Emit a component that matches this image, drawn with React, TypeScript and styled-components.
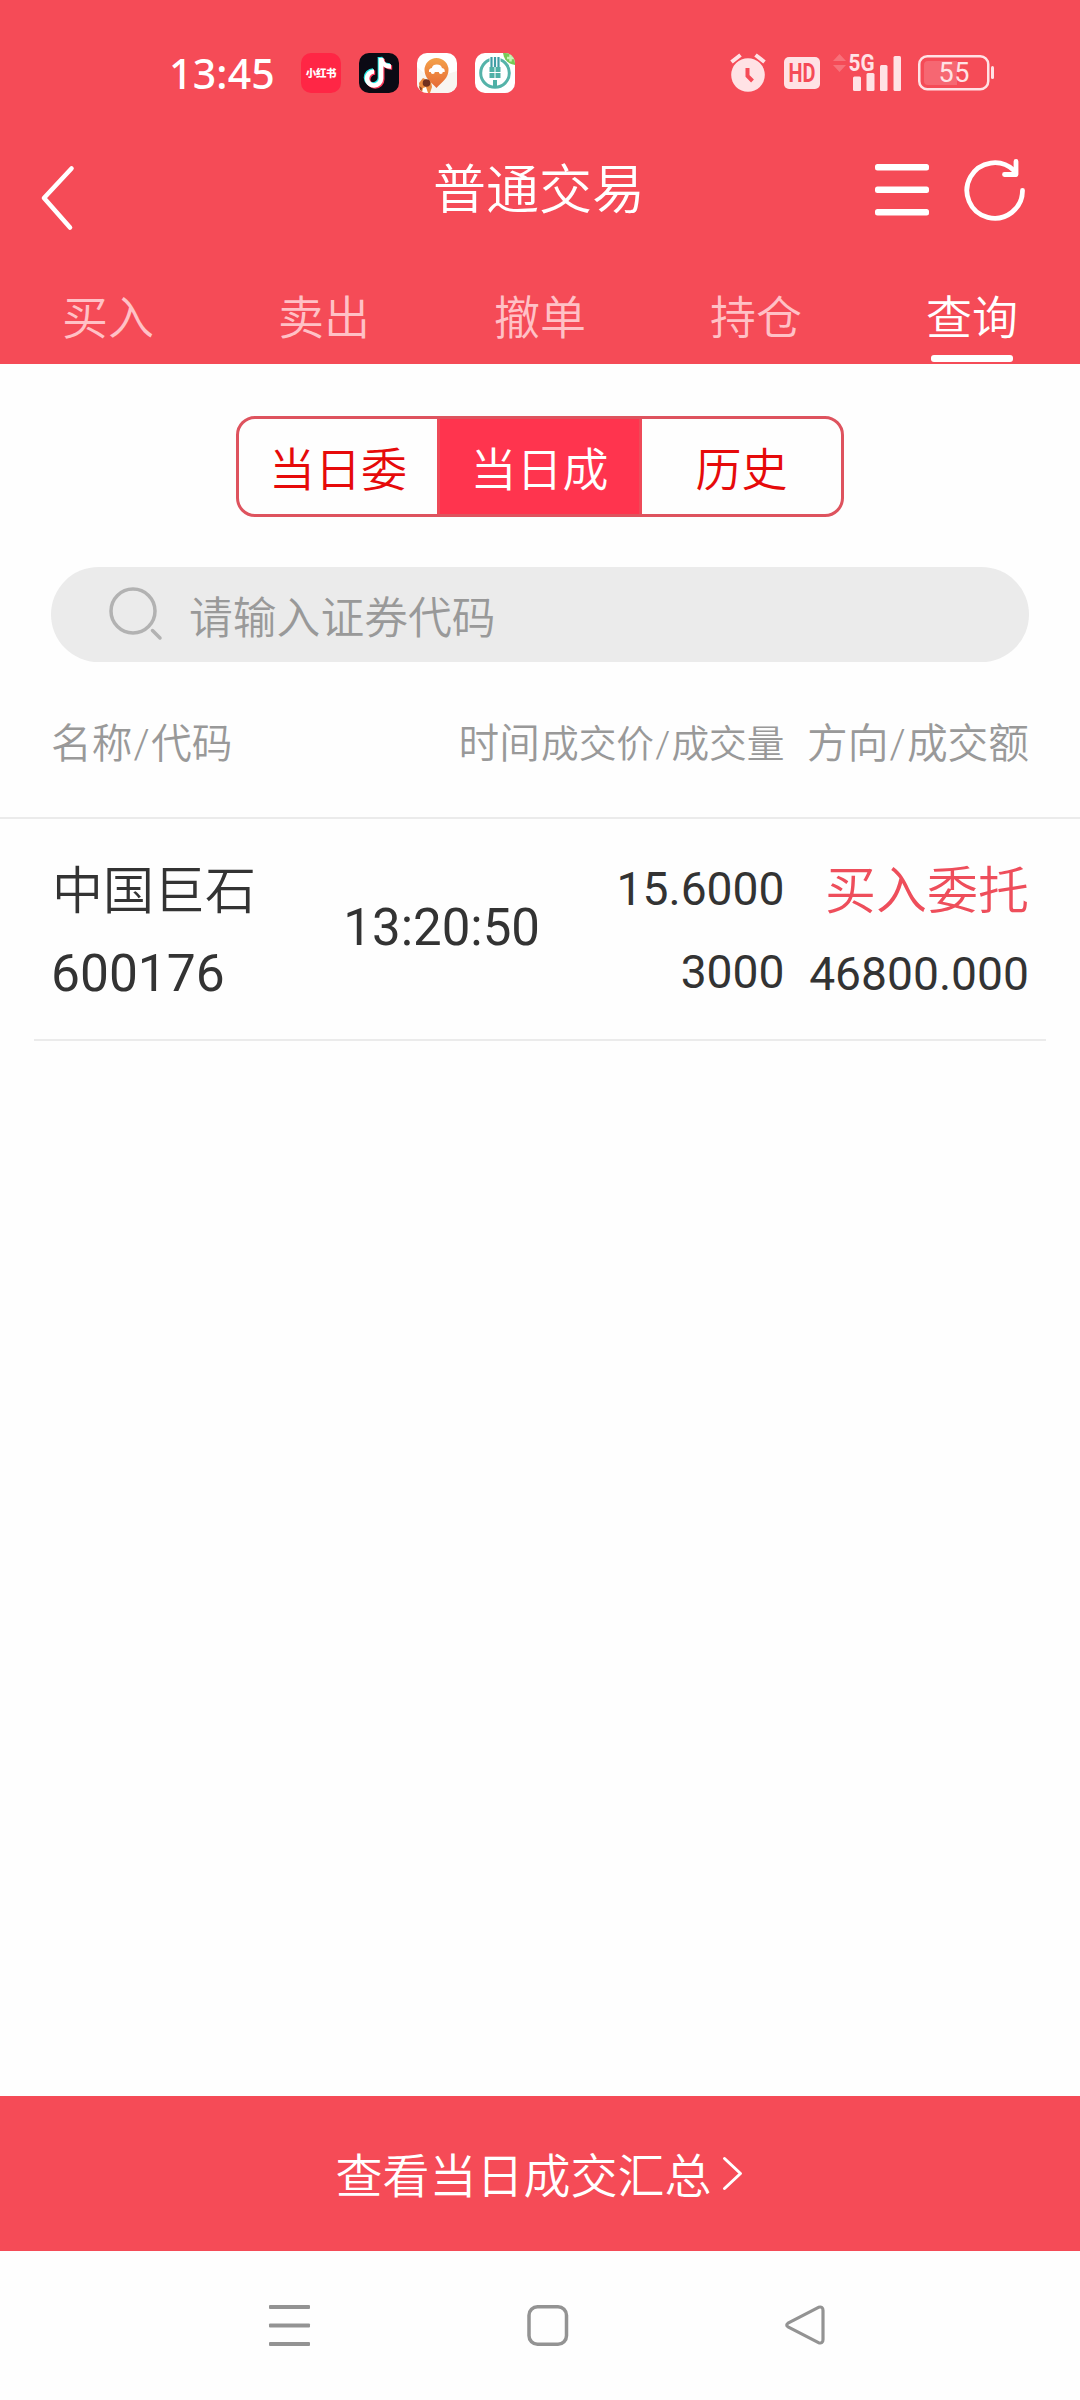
import React from 'react';
import styled, { createGlobalStyle } from 'styled-components';

const RED = '#f54b57';
const FONT = 'Roboto, "Noto Sans CJK SC", sans-serif';

const GlobalStyle = createGlobalStyle`
  *, *::before, *::after { box-sizing: border-box; }
  body { margin: 0; background: #fefefe; font-family: ${FONT}; font-weight: 400; }
  svg { display: block; flex: none; overflow: visible; }
  button { border: 0; padding: 0; background: none; font: inherit; color: inherit; }
`;

const Screen = styled.div`
  width: 1080px;
  height: 2400px;
  display: flex;
  flex-direction: column;
  background: #fefefe;
  overflow: hidden;
`;

const Header = styled.header`
  height: 364px;
  display: flex;
  flex-direction: column;
  background: ${RED};
  color: #fff;
`;

const StatusBar = styled.div`
  height: 146px;
  padding: 0 86px 0 169px;
  display: flex;
  justify-content: space-between;
  align-items: center;
`;

const StatusGroup = styled.div<{ $gap: number }>`
  display: flex;
  align-items: center;
  gap: ${(p) => p.$gap}px;
`;

const Clock = styled.span`
  width: 114px;
  font: 500 41px/50px "Noto Sans", sans-serif;
  letter-spacing: 0.2px;
  white-space: nowrap;
`;

const AppBadge = styled.div<{ $bg: string }>`
  width: 40px;
  height: 40px;
  border-radius: 10px;
  overflow: hidden;
  display: flex;
  align-items: center;
  justify-content: center;
  background: ${(p) => p.$bg};
`;

const BadgeText = styled.span`
  font: 900 10.5px/14px "Noto Sans CJK SC", sans-serif;
  color: #fff;
  letter-spacing: -0.3px;
  white-space: nowrap;
`;

const TitleBar = styled.div`
  height: 90px;
  padding: 0 55px 0 40px;
  display: grid;
  grid-template-columns: 1fr auto 1fr;
  align-items: center;
`;

const BackButton = styled.button`
  padding-top: 14px;
  justify-self: start;
`;

const Title = styled.h1`
  margin: 0 0 0 13px;
  font-size: 53px;
  line-height: 60px;
  font-weight: 350;
`;

const TitleActions = styled.div`
  justify-self: end;
  display: flex;
  align-items: center;
  gap: 34px;
  padding-bottom: 3px;
`;

const Tabs = styled.nav`
  flex: 1;
  display: grid;
  grid-template-columns: repeat(5, 1fr);
`;

const Tab = styled.button<{ $active?: boolean }>`
  display: flex;
  flex-direction: column;
  align-items: center;
  justify-content: flex-end;
  padding-bottom: 2px;
  gap: 10px;
  font-size: 46px;
  line-height: 54px;
  font-weight: 350;
  color: ${(p) => (p.$active ? '#fff' : '#ffc1c6')};

  &::after {
    content: '';
    width: 82px;
    height: 7px;
    border-radius: 3px;
    background: ${(p) => (p.$active ? '#fff' : 'transparent')};
  }
`;

const Main = styled.main`
  flex: 1;
  display: flex;
  flex-direction: column;
`;

const Segments = styled.div`
  width: 608px;
  height: 101px;
  margin: 52px auto 50px;
  display: grid;
  grid-template-columns: 198px 205px 1fr;
  border: 3px solid #de535e;
  border-radius: 19px;
  overflow: hidden;
`;

const Segment = styled.button<{ $active?: boolean }>`
  font-size: 46px;
  line-height: 54px;
  padding-top: 7px;
  font-weight: 350;
  color: ${(p) => (p.$active ? '#fff' : '#e60a0a')};
  background: ${(p) => (p.$active ? '#ff344e' : 'transparent')};
  border: solid #ee4a58;
  border-width: ${(p) => (p.$active ? '0 3px' : '0')};
`;

const SearchBox = styled.div`
  height: 95px;
  margin: 0 51px;
  padding-left: 57px;
  display: flex;
  align-items: center;
  gap: 25px;
  border-radius: 48px;
  background: #ebebeb;
`;

const Placeholder = styled.span`
  padding-top: 9px;
  font-size: 43.8px;
  line-height: 52px;
  font-weight: 350;
  color: #999;
`;

const Columns = styled.div`
  display: grid;
  grid-template-columns: repeat(4, 1fr);
`;

const TableHead = styled(Columns)`
  height: 157px;
  padding: 55px 51px 0;
  border-bottom: 2px solid #ebebeb;
`;

const HeadCell = styled.span<{ $right?: boolean; $size?: number }>`
  font-size: ${(p) => p.$size ?? 40.7}px;
  line-height: 54px;
  font-weight: 350;
  color: #999;
  white-space: nowrap;
  text-align: ${(p) => (p.$right ? 'right' : 'left')};
`;

const Slash = styled.span`
  margin: 0 1.2px;
`;

const TradeRow = styled(Columns)`
  height: 222px;
  margin: 0 34px;
  padding: 29px 17px 0;
  border-bottom: 2px solid #ebebeb;
`;

const Cell = styled.div<{ $right?: boolean }>`
  height: 166px;
  display: flex;
  flex-direction: column;
  align-items: ${(p) => (p.$right ? 'flex-end' : 'flex-start')};
`;

const TimeCell = styled(Cell)`
  justify-content: center;
  height: 160px;
`;

const Value = styled.span<{ $size: number }>`
  font-size: ${(p) => p.$size}px;
  line-height: 84px;
  color: #333;
  white-space: nowrap;
`;

const Price = styled(Value)`
  height: 83px;
  line-height: 82px;
`;

const Quantity = styled(Value)`
  line-height: 85px;
`;

const CjkValue = styled(Value)`
  height: 84px;
  line-height: 87px;
  font-weight: 350;
`;

const Direction = styled(CjkValue)`
  color: #ee4e5b;
`;

const NameValue = styled(CjkValue)`
  padding-left: 1px;
`;

const SummaryButton = styled.button`
  height: 155px;
  display: flex;
  align-items: center;
  justify-content: center;
  gap: 10px;
  background: ${RED};
  color: #fff;
  font-size: 47px;
  line-height: 56px;
  font-weight: 350;
`;

const SummaryLabel = styled.span`
  padding-top: 6px;
`;

const SystemNav = styled.div`
  height: 149px;
  padding: 0 253px 0 267px;
  display: flex;
  align-items: center;
  justify-content: space-between;
`;

const tabs = ['买入', '卖出', '撤单', '持仓', '查询'];
const segments = ['当日委', '当日成', '历史'];

const NoteIcon = () => (
  <svg width="40" height="40" viewBox="0 0 40 40" fill="none" strokeWidth="4.6">
    <g stroke="#25e8e4" transform="translate(-1 -1)">
      <path d="M22 5v20.500a7 7 0 1 1-7-7" />
      <path d="M22 5c.5 5 4 8.500 10 8.500" />
    </g>
    <g stroke="#fb3b5b" transform="translate(1.200 1)">
      <path d="M22 5v20.500a7 7 0 1 1-7-7" />
      <path d="M22 5c.5 5 4 8.500 10 8.500" />
    </g>
    <g stroke="#fff">
      <path d="M22 5v20.500a7 7 0 1 1-7-7" />
      <path d="M22 5c.5 5 4 8.500 10 8.500" />
    </g>
  </svg>
);

const CarPinIcon = () => (
  <svg width="40" height="40" viewBox="0 0 40 40">
    <defs>
      <linearGradient id="pin" x1="0" y1="0" x2="0" y2="1">
        <stop offset="0" stopColor="#f4a24a" />
        <stop offset="1" stopColor="#e66a35" />
      </linearGradient>
    </defs>
    <path d="M0 14l14 12 26-8v22H0z" fill="#f8f5f1" />
    <path d="M19.500 35C14 29 7.500 25 7.500 17a12 12 0 0 1 24 0c0 8-6.500 12-12 18z" fill="url(#pin)" />
    <path d="M12 19c-.3-2.500.5-3.500 2.800-4 1-2.700 2-3.500 5-3.500s4.200.8 5.200 3.500c2.300.5 3 1.500 2.700 4h-1.900a2 2 0 0 1-4 0h-4a2 2 0 0 1-4 0z" fill="#fff" />
    <path d="M2 30l4-5 8 4 1 5-2 6H3z" fill="#e9893f" />
    <circle cx="9.500" cy="30" r="3.800" fill="#70301f" />
    <path d="M6 35l3-1 2 6H5z" fill="#fff" />
    <path d="M2 33l3 2-1 4z" fill="#8a3f22" />
  </svg>
);

const BankIcon = () => (
  <svg width="40" height="40" viewBox="0 0 40 40" fill="none">
    <circle cx="20" cy="20" r="14.300" stroke="#55b3a9" strokeWidth="3" />
    <path d="M14.500 3h11v10h-11z" fill="#fff" />
    <path d="M16.500 4v10M20 4v10M23.500 4v10" stroke="#3f9da5" strokeWidth="2.200" />
    <path d="M14.500 14h11v11h-11zM18 27h4v8h-4z" fill="#4fb0a6" />
    <path d="M20 14v11M14 19.500h12" stroke="#fff" strokeWidth="1" />
    <path d="M28 0h12v12C33 11 29 7 28 0z" fill="#78c957" />
    <path d="M35.500 1.500v7M32 5h7" stroke="#c9f3b5" strokeWidth="2.500" />
  </svg>
);

const AlarmIcon = () => (
  <svg width="36" height="40" viewBox="0 0 36 40" fill="none">
    <circle cx="18" cy="22" r="16.800" fill="#ffe2e5" />
    <path d="M1.500 9l9-7M34.500 9l-9-7" stroke="#ffe2e5" strokeWidth="4" />
    <path d="M17.500 15v8l5 5" stroke={RED} strokeWidth="4" />
  </svg>
);

const SvgText = styled.text<{ $size: number; $weight?: number; $fill: string }>`
  font: ${(p) => p.$weight ?? 700} ${(p) => p.$size}px Roboto, sans-serif;
  fill: ${(p) => p.$fill};
`;

const HdIcon = () => (
  <svg width="36" height="32" viewBox="0 0 36 32">
    <rect width="36" height="32" rx="5" fill="#ffe2e5" />
    <SvgText $size={25} $fill={RED} x="4.500" y="25" textLength="27" lengthAdjust="spacingAndGlyphs">HD</SvgText>
  </svg>
);

const SignalIcon = () => (
  <svg width="69" height="40" viewBox="0 0 69 40" fill="#ffe2e5">
    <path d="M0 8l6.500-7L13 8zM0 12h13l-6.500 7z" opacity=".25" />
    <SvgText $size={24} $fill="#ffe2e5" x="15.500" y="18" textLength="26" lengthAdjust="spacingAndGlyphs">5G</SvgText>
    <rect x="20" y="23.500" width="8" height="14.500" rx="1.500" />
    <rect x="33.500" y="20" width="8" height="18" rx="1.500" />
    <rect x="47" y="12" width="7.500" height="26" rx="1.500" />
    <rect x="60.500" y="3" width="7.500" height="35" rx="1.500" />
  </svg>
);

const BatteryIcon = () => (
  <svg width="76" height="36" viewBox="0 0 76 36">
    <rect x="1.250" y="1.250" width="69" height="33" rx="8" fill="none" stroke="#ffe2e5" strokeWidth="2.500" />
    <path d="M10 6h29v24H10a4 4 0 0 1-4-4V10a4 4 0 0 1 4-4z" fill="#fff" opacity=".16" />
    <rect x="73" y="11" width="3" height="13" rx="1.500" fill="#ffe2e5" />
    <SvgText $size={27} $weight={400} $fill="#ffe2e5" x="20.500" y="27" textLength="31">55</SvgText>
  </svg>
);

export default function App() {
  return (
    <Screen>
      <GlobalStyle />
      <Header>
        <StatusBar>
          <StatusGroup $gap={18}>
            <Clock>13:45</Clock>
            <AppBadge $bg="#ff2645"><BadgeText>小红书</BadgeText></AppBadge>
            <AppBadge $bg="#0b0a14"><NoteIcon /></AppBadge>
            <AppBadge $bg="#fff"><CarPinIcon /></AppBadge>
            <AppBadge $bg="#fff"><BankIcon /></AppBadge>
          </StatusGroup>
          <StatusGroup $gap={16}>
            <StatusGroup $gap={13}>
              <StatusGroup $gap={18}>
                <AlarmIcon />
                <HdIcon />
              </StatusGroup>
              <SignalIcon />
            </StatusGroup>
            <BatteryIcon />
          </StatusGroup>
        </StatusBar>
        <TitleBar>
          <BackButton aria-label="返回">
            <svg width="36" height="66" viewBox="0 0 36 66" fill="none" stroke="#fff" strokeWidth="4.600" strokeLinecap="round" strokeLinejoin="round">
              <path d="M31.500 3.500L4 33l26 29.500" />
            </svg>
          </BackButton>
          <Title>普通交易</Title>
          <TitleActions>
            <svg width="54" height="52" viewBox="0 0 54 52" fill="#fff">
              <rect width="54" height="6.500" rx="2.500" />
              <rect y="22.500" width="54" height="6.500" rx="2.500" />
              <rect y="45" width="54" height="6.500" rx="2.500" />
            </svg>
            <svg width="62" height="62" viewBox="0 0 62 62" fill="none" stroke="#fff" strokeWidth="4.800" strokeLinecap="round" strokeLinejoin="round">
              <path d="M59.500 31.500A27.800 27.800 0 1 1 51 11.500" />
              <path d="M53 2.500V15.500H41.500" />
            </svg>
          </TitleActions>
        </TitleBar>
        <Tabs>
          {tabs.map((t) => (
            <Tab key={t} $active={t === '查询'}>{t}</Tab>
          ))}
        </Tabs>
      </Header>
      <Main>
        <Segments>
          {segments.map((s) => (
            <Segment key={s} $active={s === '当日成'}>{s}</Segment>
          ))}
        </Segments>
        <SearchBox>
          <svg width="56" height="56" viewBox="0 0 56 56" fill="none" stroke="#b2b2b2" strokeWidth="3.500" strokeLinecap="round">
            <circle cx="25" cy="24" r="22" />
            <path d="M44.500 43.500L52 51" />
          </svg>
          <Placeholder>请输入证券代码</Placeholder>
        </SearchBox>
        <TableHead>
          <HeadCell>名称<Slash>/</Slash>代码</HeadCell>
          <HeadCell $right>时间</HeadCell>
          <HeadCell $right $size={37.7}>成交价<Slash>/</Slash>成交量</HeadCell>
          <HeadCell $right>方向<Slash>/</Slash>成交额</HeadCell>
        </TableHead>
        <TradeRow>
          <Cell>
            <NameValue $size={51}>中国巨石</NameValue>
            <Value $size={51.5}>600176</Value>
          </Cell>
          <TimeCell $right>
            <Value $size={51}>13:20:50</Value>
          </TimeCell>
          <Cell $right>
            <Price $size={46.2}>15.6000</Price>
            <Quantity $size={46.2}>3000</Quantity>
          </Cell>
          <Cell $right>
            <Direction $size={51}>买入委托</Direction>
            <Value $size={46.2}>46800.000</Value>
          </Cell>
        </TradeRow>
      </Main>
      <SummaryButton>
        <SummaryLabel>查看当日成交汇总</SummaryLabel>
        <svg width="23" height="36" viewBox="0 0 23 36" fill="none" stroke="#fff" strokeWidth="3" strokeLinecap="round" strokeLinejoin="round">
          <path d="M2.500 2.500L18.500 17.500 2.500 32.500" />
        </svg>
      </SummaryButton>
      <SystemNav>
        <svg width="44" height="42" viewBox="0 0 44 42" fill="#939393">
          <rect x="2" width="41" height="4" rx="1" />
          <rect x="2" y="18.500" width="41" height="4" rx="1" />
          <rect x="2" y="37" width="41" height="4" rx="1" />
        </svg>
        <svg width="44" height="42" viewBox="0 0 44 42" fill="none" stroke="#939393" strokeWidth="3.500">
          <rect x="3" y="1.750" width="37.500" height="37.500" rx="8.500" />
        </svg>
        <svg width="42" height="42" viewBox="0 0 42 42" fill="none" stroke="#939393" strokeWidth="3.200" strokeLinejoin="round">
          <path d="M3 18.200L33.500 2.300Q38 1 38 5.500V34.500Q38 39 33.500 37.700L3 21.800Q.5 20 3 18.200z" />
        </svg>
      </SystemNav>
    </Screen>
  );
}
